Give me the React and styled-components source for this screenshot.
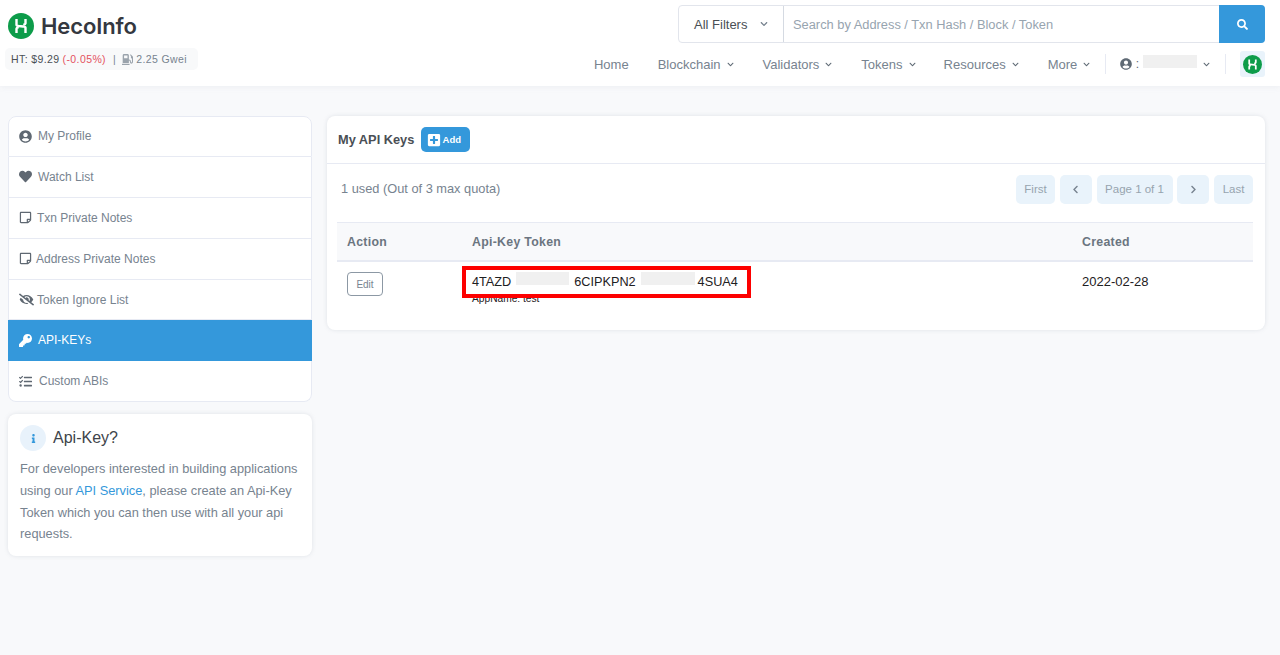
import React from "react";
import styled, { createGlobalStyle } from "styled-components";
import {
  FaUserCircle, FaHeart, FaRegStickyNote, FaEyeSlash, FaKey, FaTasks, FaSearch,
  FaChevronDown, FaInfo, FaPlusSquare, FaChevronLeft, FaChevronRight, FaGasPump,
} from "react-icons/fa";

const Global = createGlobalStyle`
  html, body { margin: 0; padding: 0; background: #f8f9fb; }
  body { font-family: "Liberation Sans", Arial, sans-serif; font-size: 13px; color: #1e2022; width: 1280px; height: 655px; overflow: hidden; }
  * { box-sizing: border-box; }
`;

const Header = styled.header`
  height: 86px;
  background: #fff;
  box-shadow: 0 1px 6px rgba(140, 152, 164, 0.1);
  display: flex;
  justify-content: space-between;
  padding: 5px 15px 0 5px;
`;
const Brand = styled.div`
  display: flex;
  flex-direction: column;
  padding-top: 7px;
`;
const LogoRow = styled.div`
  display: flex;
  align-items: center;
  gap: 7px;
  margin-left: 3px;
  height: 28px;
`;
const LogoText = styled.span`
  font-family: Inter, sans-serif;
  font-weight: 600;
  font-size: 22px;
  letter-spacing: -0.1px;
  color: #343840;
`;
const PriceBox = styled.div`
  margin-top: 8px;
  width: 193px;
  height: 22px;
  background: #f8f9fa;
  border-radius: 5px;
  padding-left: 6px;
  display: flex;
  align-items: center;
  font-size: 10.5px;
  letter-spacing: 0.4px;
  color: #77838f;
  white-space: nowrap;
`;
const Price = styled.span`color: #4a4f55; margin-right: 3px;`;
const Change = styled.span`color: #e4525f;`;
const Sep = styled.span`margin: 0 6px 0 7px;`;
const Gas = styled(FaGasPump)`margin-right: 3px; font-size: 11px; color: #9aa3ac;`;

const HeaderRight = styled.div`
  width: 587px;
  display: flex;
  flex-direction: column;
`;
const Search = styled.div`
  height: 38px;
  display: flex;
  border: 1px solid #e2e5ec;
  border-radius: 4px;
  background: #fff;
`;
const FilterSelect = styled.div`
  width: 105px;
  padding-left: 15px;
  display: flex;
  align-items: center;
  gap: 13px;
  border-right: 1px solid #d5dae2;
  color: #4a4f55;
`;
const Chevron = styled(FaChevronDown)`
  font-size: ${(p) => p.$size || 7}px;
  color: ${(p) => p.$color || "#77838f"};
  flex: none;
`;
const Placeholder = styled.div`
  flex: 1;
  padding-left: 9px;
  display: flex;
  align-items: center;
  font-size: 12.85px;
  color: #97a4af;
`;
const SearchBtn = styled.div`
  width: 46px;
  margin: -1px;
  background: #3498db;
  border-radius: 0 4px 4px 0;
  color: #fff;
  display: flex;
  align-items: center;
  justify-content: center;
  font-size: 11px;
`;
const Nav = styled.nav`
  margin-top: 8px;
  height: 26px;
  display: flex;
  align-items: center;
  justify-content: flex-end;
  color: #77838f;
`;
const NavItem = styled.div`
  display: flex;
  flex: none;
  align-items: center;
  gap: 6px;
  margin-right: ${(p) => p.$mr}px;
  white-space: nowrap;
`;
const Divider = styled.div`
  width: 1px;
  height: 20px;
  flex: none;
  background: #e7eaf3;
  margin: ${(p) => p.$m};
`;
const UserMenu = styled.div`
  display: flex;
  flex: none;
  align-items: center;
  color: #5f6a75;
  font-size: 12px;
`;
const UserName = styled.span`
  width: 54px;
  height: 13px;
  background: #f0f0f0;
  margin: -6px 6px 0 4px;
`;
const NetBox = styled.div`
  width: 25px;
  height: 26px;
  flex: none;
  background: #e9f3fb;
  border-radius: 3px;
  display: flex;
  align-items: center;
  justify-content: center;
`;

const Main = styled.main`
  display: flex;
  align-items: flex-start;
  gap: 15px;
  padding: 30px 15px 0 8px;
`;
const Side = styled.aside`
  width: 304px;
  display: flex;
  flex-direction: column;
  gap: 12px;
`;
const Menu = styled.div`
  background: #fff;
  border-radius: 8px;
`;
const MenuItem = styled.div`
  height: 40.9px;
  display: flex;
  align-items: center;
  padding-left: 10px;
  gap: ${(p) => p.$gap}px;
  font-size: 12px;
  color: ${(p) => (p.$active ? "#fff" : "#77838f")};
  background: ${(p) => (p.$active ? "#3498db" : "transparent")};
  border: 1px solid ${(p) => (p.$active ? "#3498db" : "#e7eaf3")};
  border-top: 0;
  &:first-child { border-top: 1px solid #e7eaf3; border-radius: 8px 8px 0 0; }
  &:last-child { border-radius: 0 0 8px 8px; }
  svg { color: ${(p) => (p.$active ? "#fff" : "#5f6872")}; font-size: ${(p) => p.$icon || 13}px; flex: none; }
`;
const InfoCard = styled.section`
  background: #fff;
  border-radius: 8px;
  box-shadow: 0 0 4px rgba(140, 152, 164, 0.22);
  height: 142px;
  padding: 11px 12px;
`;
const InfoHead = styled.div`
  display: flex;
  align-items: center;
  gap: 7px;
  font-size: 16px;
  color: #3e444a;
`;
const InfoIcon = styled.span`
  width: 26px;
  height: 26px;
  border-radius: 50%;
  background: #e8f2fb;
  color: #3498db;
  display: flex;
  align-items: center;
  justify-content: center;
  font-size: 9px;
`;
const InfoText = styled.p`
  margin: 7px 0 0;
  font-size: 12.8px;
  line-height: 21.7px;
  color: #77838f;
`;
const Link = styled.a`color: #3498db;`;

const Card = styled.section`
  width: 938px;
  height: 214px;
  background: #fff;
  border-radius: 8px;
  box-shadow: 0 0 4px rgba(140, 152, 164, 0.22);
`;
const CardHead = styled.div`
  height: 48px;
  border-bottom: 1px solid #e7eaf3;
  display: flex;
  align-items: center;
  padding: 0 11px;
  gap: 7px;
`;
const CardTitle = styled.h2`
  margin: 0;
  font-size: 12.8px;
  font-weight: 700;
  color: #4a4f55;
`;
const AddBtn = styled.button`
  width: 49px;
  height: 25px;
  border: 0;
  border-radius: 5px;
  background: #3498db;
  color: #fff;
  font: 700 9.5px "Liberation Sans", sans-serif;
  display: flex;
  align-items: center;
  justify-content: center;
  gap: 2px;
  padding: 0 4px 0 0;
  svg { font-size: 14px; }
`;
const CardBody = styled.div`
  padding: 11px 12px 0 10px;
`;
const Toolbar = styled.div`
  display: flex;
  justify-content: space-between;
  align-items: center;
  height: 29px;
  padding-left: 4px;
`;
const Used = styled.span`
  color: #77838f;
  font-size: 12.8px;
  margin-bottom: 2px;
`;
const Pager = styled.div`
  display: flex;
  gap: 4.75px;
`;
const PageBtn = styled.div`
  width: ${(p) => p.$w}px;
  height: 29px;
  padding-bottom: 1px;
  background: #e9f3fb;
  border-radius: 5px;
  color: #97a4af;
  font-size: 11.5px;
  display: flex;
  align-items: center;
  justify-content: center;
  svg { font-size: 9px; color: #77838f; }
`;
const TableGrid = styled.div`
  display: grid;
  grid-template-columns: 125px 610px 1fr;
`;
const HeadRow = styled(TableGrid)`
  margin-top: 18px;
  height: 40px;
  background: #f8f9fb;
  border-top: 1px solid #e7eaf3;
  border-bottom: 2px solid #e7eaf3;
  align-items: center;
`;
const Th = styled.div`
  padding-left: 10px;
  font-weight: 700;
  font-size: 12.3px;
  letter-spacing: 0.3px;
  color: #6b7580;
`;
const ActionCell = styled.div`
  padding: 10px 0 0 10px;
`;
const DateCell = styled.div`
  padding: 12px 0 0 10px;
  font-size: 13px;
  line-height: 15px;
  color: #1e2022;
`;
const EditBtn = styled.button`
  display: block;
  width: 36px;
  height: 24px;
  background: #fff;
  border: 1px solid #8c98a4;
  border-radius: 4px;
  color: #77838f;
  font: 10px "Liberation Sans", sans-serif;
  padding: 0;
`;
const TokenCell = styled.div`
  position: relative;
  padding: 11px 0 0 10px;
`;
const Token = styled.div`
  display: flex;
  align-items: flex-start;
  height: 18px;
  line-height: 18px;
  font-size: 12.7px;
  color: #1e2022;
`;
const Redacted = styled.span`
  width: ${(p) => p.$w}px;
  height: 13px;
  margin: -1px ${(p) => p.$r}px 0 ${(p) => p.$l}px;
  background: #f0f0f0;
`;
const AppName = styled.div`
  margin-top: 2px;
  font-size: 10.2px;
  line-height: 12px;
  color: #1e2022;
`;
const Highlight = styled.div`
  position: absolute;
  left: 0;
  top: 4px;
  width: 289px;
  height: 32px;
  border: 4px solid #fd0000;
  pointer-events: none;
`;

function HecoMark({ size, bg = "#0d9c4a" }) {
  return (
    <svg width={size} height={size} viewBox="0 0 26 26" aria-hidden="true">
      <circle cx="13" cy="13" r="13" fill={bg} />
      <g fill="none" stroke="#fff" strokeWidth="2.4" strokeLinecap="butt" strokeLinejoin="round">
        <path d="M8.5 6v6c0 2 9 .4 9 2.6V20" />
        <path d="M17.5 6v4.4c0 .8-1 1.2-2.2 1.5" />
        <path d="M8.5 20v-4.4c0-.8 1-1.2 2.2-1.5" />
      </g>
    </svg>
  );
}

const menu = [
  { icon: <FaUserCircle />, label: "My Profile", gap: 6 },
  { icon: <FaHeart />, label: "Watch List", gap: 6 },
  { icon: <FaRegStickyNote />, label: "Txn Private Notes", gap: 5 },
  { icon: <FaRegStickyNote />, label: "Address Private Notes", gap: 4 },
  { icon: <FaEyeSlash />, label: "Token Ignore List", gap: 3, size: 15 },
  { icon: <FaKey />, label: "API-KEYs", gap: 6, active: true },
  { icon: <FaTasks />, label: "Custom ABIs", gap: 7 },
];
const nav = [
  { label: "Home", mr: 29 },
  { label: "Blockchain", caret: true, mr: 29 },
  { label: "Validators", caret: true, mr: 29 },
  { label: "Tokens", caret: true, mr: 28 },
  { label: "Resources", caret: true, mr: 29 },
  { label: "More", caret: true, mr: 0 },
];

export default function App() {
  return (
    <>
      <Global />
      <Header>
        <Brand>
          <LogoRow>
            <HecoMark size={26} />
            <LogoText>HecoInfo</LogoText>
          </LogoRow>
          <PriceBox>
            <Price>HT: $9.29</Price>
            <Change>(-0.05%)</Change>
            <Sep>|</Sep>
            <Gas />
            2.25 Gwei
          </PriceBox>
        </Brand>
        <HeaderRight>
          <Search>
            <FilterSelect>
              All Filters <Chevron $size={8} />
            </FilterSelect>
            <Placeholder>Search by Address / Txn Hash / Block / Token</Placeholder>
            <SearchBtn><FaSearch /></SearchBtn>
          </Search>
          <Nav>
            {nav.map((n) => (
              <NavItem key={n.label} $mr={n.mr}>
                {n.label}
                {n.caret && <Chevron $color="#5f6a75" />}
              </NavItem>
            ))}
            <Divider $m="0 14px 0 15px" />
            <UserMenu>
              <FaUserCircle />
              <span>&nbsp;:</span>
              <UserName />
              <Chevron $color="#5f6a75" />
            </UserMenu>
            <Divider $m="0 14px 0 15px" />
            <NetBox><HecoMark size={19} /></NetBox>
          </Nav>
        </HeaderRight>
      </Header>
      <Main>
        <Side>
          <Menu>
            {menu.map((m) => (
              <MenuItem key={m.label} $gap={m.gap} $active={m.active} $icon={m.size}>
                {m.icon}
                {m.label}
              </MenuItem>
            ))}
          </Menu>
          <InfoCard>
            <InfoHead>
              <InfoIcon><FaInfo /></InfoIcon>
              Api-Key?
            </InfoHead>
            <InfoText>
              For developers interested in building applications using our <Link>API Service</Link>, please create an Api-Key Token which you can then use with all your api requests.
            </InfoText>
          </InfoCard>
        </Side>
        <Card>
          <CardHead>
            <CardTitle>My API Keys</CardTitle>
            <AddBtn><FaPlusSquare /> Add</AddBtn>
          </CardHead>
          <CardBody>
            <Toolbar>
              <Used>1 used (Out of 3 max quota)</Used>
              <Pager>
                <PageBtn $w={39}>First</PageBtn>
                <PageBtn $w={32}><FaChevronLeft /></PageBtn>
                <PageBtn $w={76}>Page 1 of 1</PageBtn>
                <PageBtn $w={32}><FaChevronRight /></PageBtn>
                <PageBtn $w={39}>Last</PageBtn>
              </Pager>
            </Toolbar>
            <HeadRow>
              <Th>Action</Th>
              <Th>Api-Key Token</Th>
              <Th>Created</Th>
            </HeadRow>
            <TableGrid>
              <ActionCell><EditBtn>Edit</EditBtn></ActionCell>
              <TokenCell>
                <Token>
                  4TAZD
                  <Redacted $w={53} $l={5} $r={5} />
                  6CIPKPN2
                  <Redacted $w={54} $l={5} $r={3} />
                  4SUA4
                </Token>
                <AppName>AppName: test</AppName>
                <Highlight />
              </TokenCell>
              <DateCell>2022-02-28</DateCell>
            </TableGrid>
          </CardBody>
        </Card>
      </Main>
    </>
  );
}
